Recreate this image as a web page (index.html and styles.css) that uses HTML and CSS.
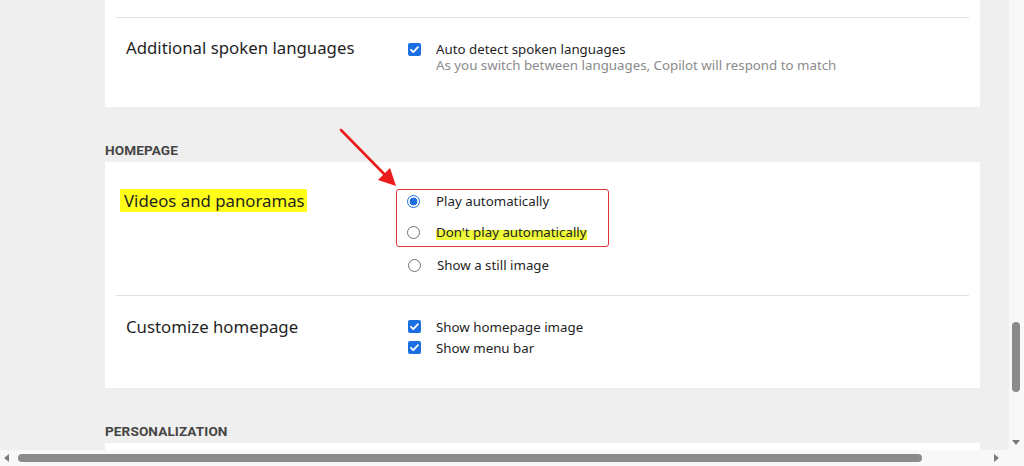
FILE: index.html
```html
<!DOCTYPE html>
<html>
<head>
  <meta charset="utf-8" />
  <link rel="stylesheet" href="styles.css">
</head>
<body>
  <div class="window">
    <div class="content">
      <div class="card card-top">
        <div class="divider"></div>
        <div class="row row-lang">
          <div class="row-title">Additional spoken languages</div>
          <div class="controls">
            <div class="option">
              <span class="check"><svg viewBox="0 0 13 13" width="13" height="13"><path d="M3 6.8l2.3 2.3L10 4.2" fill="none" stroke="#fff" stroke-width="1.8" stroke-linecap="round" stroke-linejoin="round"/></svg></span>
              <span class="label">Auto detect spoken languages</span>
            </div>
            <div class="hint">As you switch between languages, Copilot will respond to match</div>
          </div>
        </div>
      </div>

      <h3 class="section">HOMEPAGE</h3>
      <div class="card">
        <div class="row row-video">
          <div class="row-title"><span class="mark">Videos and panoramas</span></div>
          <div class="controls">
            <div class="callout">
              <div class="option radio-opt">
                <span class="radio on"></span>
                <span class="label">Play automatically</span>
              </div>
              <div class="option radio-opt">
                <span class="radio"></span>
                <span class="label marker">Don't play automatically</span>
              </div>
            </div>
            <div class="option radio-opt last">
              <span class="radio"></span>
              <span class="label">Show a still image</span>
            </div>
          </div>
          <svg class="arrow" width="70" height="70" viewBox="0 0 70 70">
            <line x1="3" y1="3" x2="50" y2="51" stroke="#ec1c1c" stroke-width="2.6" stroke-linecap="round"/>
            <polygon points="58,59 40,53 52,41" fill="#ec1c1c"/>
          </svg>
        </div>
        <div class="divider"></div>
        <div class="row row-custom">
          <div class="row-title">Customize homepage</div>
          <div class="controls">
            <div class="option check-opt">
              <span class="check"><svg viewBox="0 0 13 13" width="13" height="13"><path d="M3 6.8l2.3 2.3L10 4.2" fill="none" stroke="#fff" stroke-width="1.8" stroke-linecap="round" stroke-linejoin="round"/></svg></span>
              <span class="label">Show homepage image</span>
            </div>
            <div class="option check-opt">
              <span class="check"><svg viewBox="0 0 13 13" width="13" height="13"><path d="M3 6.8l2.3 2.3L10 4.2" fill="none" stroke="#fff" stroke-width="1.8" stroke-linecap="round" stroke-linejoin="round"/></svg></span>
              <span class="label">Show menu bar</span>
            </div>
          </div>
        </div>
      </div>

      <h3 class="section">PERSONALIZATION</h3>
      <div class="card card-bottom"></div>
    </div>

    <div class="vscroll">
      <div class="vthumb"></div>
      <span class="tri tri-down"></span>
    </div>
    <div class="hscroll">
      <span class="tri tri-left"></span>
      <div class="hthumb"></div>
      <span class="tri tri-right"></span>
    </div>
    <div class="corner"></div>
  </div>
</body>
</html>
```

FILE: styles.css
```css
body {
  margin: 0;
  background: #efefef;
  font-family: "Noto Sans", "Open Sans", sans-serif;
  color: #1f1f1f;
}
.window {
  display: grid;
  grid-template-columns: 1fr 15px;
  grid-template-rows: 450px 16px;
  height: 466px;
  overflow: hidden;
}
.content {
  overflow: hidden;
  padding-left: 105px;
}
.card {
  width: 853px;
  padding: 0 11px;
  background: #fff;
}
.card-top {
  padding-top: 17px;
}
.card-bottom {
  height: 20px;
}
.divider {
  height: 1px;
  background: #e1e1e1;
}
.row {
  display: flex;
  padding-left: 10px;
  position: relative;
}
.row-title {
  width: 282px;
  flex-shrink: 0;
  font-size: 16.8px;
  line-height: 24px;
}
.row-lang {
  height: 89px;
  padding-top: 18px;
  box-sizing: border-box;
}
.row-video {
  height: 133px;
  padding-top: 27px;
  box-sizing: border-box;
}
.row-custom {
  height: 92px;
  padding-top: 19px;
  box-sizing: border-box;
}
.mark {
  background: #ffff1a;
  padding: 0 2px 0 4px;
  margin-left: -6px;
}
.option {
  display: flex;
  align-items: center;
  height: 20px;
  font-size: 13.3px;
}
.label {
  margin-left: 15px;
}
.hint {
  font-size: 13.3px;
  color: #8b8b8b;
  margin: -1px 0 0 28px;
  line-height: 15px;
}
.row-lang .option {
  margin-top: 3px;
}
.check {
  width: 13px;
  height: 13px;
  border-radius: 2px;
  background: #1b6fe0;
  display: flex;
  flex-shrink: 0;
}
.check-opt {
  height: 21px;
}
.row-custom .controls {
  padding-top: 1px;
}
.radio {
  width: 11px;
  height: 11px;
  border: 1px solid #6f6f6f;
  border-radius: 50%;
  flex-shrink: 0;
  box-sizing: content-box;
}
.radio.on {
  border-color: #1b6fe0;
  background: radial-gradient(circle, #1b6fe0 0 3.6px, #fff 4.2px);
}
.radio-opt .label {
  margin-left: 16px;
}
.callout {
  width: 201px;
  margin-left: -12px;
  padding: 1px 0 4px 10px;
  border: 1.5px solid #e0363b;
  border-radius: 3px;
}
.callout .radio-opt + .radio-opt {
  margin-top: 11px;
}
.last {
  margin-top: 8px;
}
.marker {
  background: linear-gradient(transparent 38%, #eef93a 38%, #eef93a 96%, transparent 96%);
}
.arrow {
  position: absolute;
  left: 222px;
  top: -35px;
}
.section {
  margin: 0;
  padding: 35px 0 4px;
  font-family: Roboto, "Noto Sans", sans-serif;
  font-size: 13.6px;
  font-weight: bold;
  line-height: 16px;
  color: #454545;
  letter-spacing: 0.1px;
}
.vscroll {
  background: #f8f8f8;
  position: relative;
}
.vthumb {
  width: 8px;
  height: 70px;
  margin: 322px 0 0 3px;
  border-radius: 4px;
  background: #8b8b8b;
}
.hscroll {
  background: #f8f8f8;
  display: flex;
  align-items: center;
}
.hthumb {
  width: 904px;
  height: 8px;
  margin-left: 9px;
  border-radius: 4px;
  background: #8b8b8b;
}
.corner {
  background: #f8f8f8;
}
.tri {
  width: 0;
  height: 0;
  border: 4px solid transparent;
}
.tri-down {
  position: absolute;
  left: 3px;
  top: 440px;
  border-top: 5px solid #7a7a7a;
  border-bottom: 0;
}
.tri-left {
  margin-left: 4px;
  border-right: 5px solid #7a7a7a;
  border-left: 0;
}
.tri-right {
  margin-left: 72px;
  border-left: 5px solid #7a7a7a;
  border-right: 0;
}
```
